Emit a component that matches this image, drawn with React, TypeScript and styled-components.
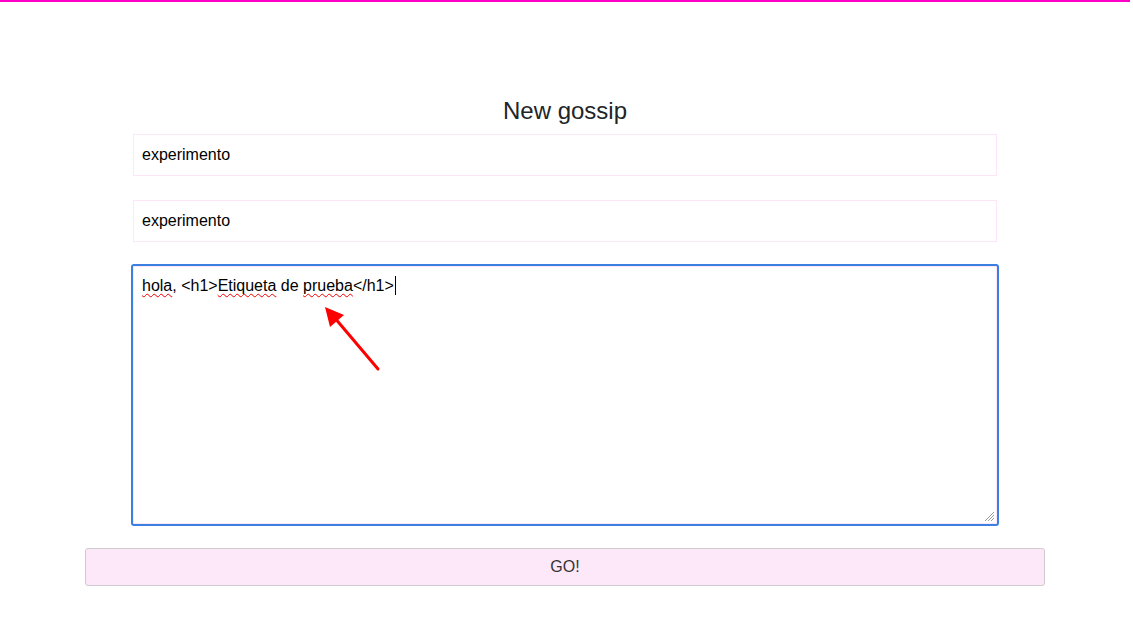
import React from "react";
import styled, { createGlobalStyle } from "styled-components";

const Global = createGlobalStyle`
  html, body { margin: 0; padding: 0; background: #fff; }
  body { font-family: "Liberation Sans", Arial, sans-serif; }
`;

const Page = styled.div`
  width: 1130px;
  min-height: 628px;
  border-top: 2px solid #ff00c8;
  box-sizing: border-box;
`;

const Container = styled.div`
  width: 960px;
  margin: 0 auto;
  padding-top: 94px;
  display: flex;
  flex-direction: column;
  align-items: center;
`;

const Title = styled.h2`
  margin: 0 0 9px;
  font-size: 24px;
  line-height: 29px;
  font-weight: 400;
  color: #212529;
`;

const Field = styled.div`
  width: 864px;
  height: 42px;
  box-sizing: border-box;
  border: 1px solid #fde6f7;
  padding: 0 8px;
  display: flex;
  align-items: center;
  font-size: 16px;
  color: #000;
  margin-bottom: 24px;
`;

const TextArea = styled.div`
  position: relative;
  width: 864px;
  height: 258px;
  box-sizing: border-box;
  padding: 9px 8px;
  border: 1px solid #fde6f7;
  outline: 2px solid #3b7fe0;
  outline-offset: 0;
  border-radius: 1px;
  font-size: 16px;
  line-height: 20px;
  color: #000;
  margin-bottom: 24px;
`;

const Misspelled = styled.span`
  text-decoration: underline wavy #e00;
  text-decoration-thickness: 1px;
  text-underline-offset: 2px;
  text-decoration-skip-ink: none;
`;

const Caret = styled.span`
  display: inline-block;
  width: 1px;
  height: 19px;
  background: #000;
  vertical-align: -4px;
  margin-left: 1px;
`;

const Grip = styled.svg`
  position: absolute;
  right: 1px;
  bottom: 1px;
`;

const Arrow = styled.svg`
  position: absolute;
  left: 180px;
  top: 30px;
  overflow: visible;
`;

const GoButton = styled.button`
  width: 960px;
  height: 38px;
  box-sizing: border-box;
  background: #fde8f9;
  border: 1px solid #cfcbcf;
  border-radius: 3px;
  font-family: "Liberation Sans", Arial, sans-serif;
  font-size: 16px;
  color: #333;
  cursor: pointer;
`;

export default function App() {
  return (
    <>
      <Global />
      <Page>
        <Container>
          <Title>New gossip</Title>
          <Field>experimento</Field>
          <Field>experimento</Field>
          <TextArea>
            <Misspelled>hola</Misspelled>, &lt;h1&gt;<Misspelled>Etiqueta</Misspelled> de{" "}
            <Misspelled>prueba</Misspelled>&lt;/h1&gt;
            <Caret />
            <Arrow width="70" height="80" viewBox="0 0 70 80">
              <line x1="64" y1="72" x2="20" y2="20" stroke="#f00" strokeWidth="3" strokeLinecap="round" />
              <polygon points="11,10 16,30 30,18" fill="#f00" />
            </Arrow>
            <Grip width="11" height="11" viewBox="0 0 11 11">
              <line x1="1" y1="10" x2="10" y2="1" stroke="#999" strokeWidth="1" />
              <line x1="4" y1="10" x2="10" y2="4" stroke="#999" strokeWidth="1" />
              <line x1="7" y1="10" x2="10" y2="7" stroke="#999" strokeWidth="1" />
            </Grip>
          </TextArea>
          <GoButton>GO!</GoButton>
        </Container>
      </Page>
    </>
  );
}
